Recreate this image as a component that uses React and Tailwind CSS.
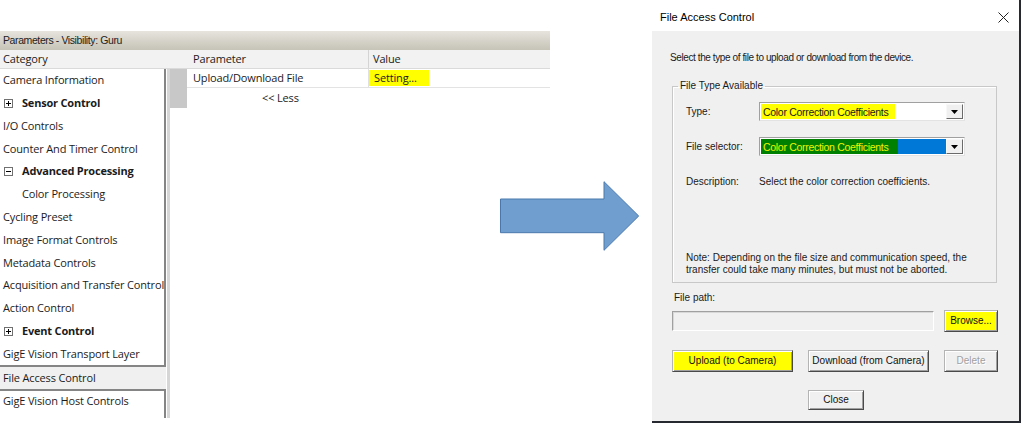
import React from "react";

const SANS = "font-['Liberation_Sans',Arial,sans-serif]";

function TreeBox({ minus }) {
  return (
    <svg width="9" height="9" viewBox="0 0 9 9" className="shrink-0">
      <rect x="0.5" y="0.5" width="8" height="8" fill="white" stroke="#707070" />
      <path d="M2 4.5h5" stroke="#000" />
      {!minus && <path d="M4.5 2v5" stroke="#000" />}
    </svg>
  );
}

const items1 = [
  { t: "Camera Information" },
  { t: "Sensor Control", bold: true, box: "plus" },
  { t: "I/O Controls" },
  { t: "Counter And Timer Control" },
  { t: "Advanced Processing", bold: true, box: "minus" },
  { t: "Color Processing", indent: true },
  { t: "Cycling Preset" },
  { t: "Image Format Controls" },
  { t: "Metadata Controls" },
  { t: "Acquisition and Transfer Control" },
  { t: "Action Control" },
  { t: "Event Control", bold: true, box: "plus" },
  { t: "GigE Vision Transport Layer" },
];

function Item({ it }) {
  if (it.box) {
    return (
      <div className="h-[22.8px] flex items-center pl-[4px] whitespace-nowrap overflow-hidden">
        <TreeBox minus={it.box === "minus"} />
        <span className="ml-[9px] font-bold tracking-[-0.2px]">{it.t}</span>
      </div>
    );
  }
  return (
    <div
      className={
        "h-[22.8px] flex items-center whitespace-nowrap overflow-hidden " +
        (it.indent ? "pl-[22px]" : "pl-[3px]")
      }
    >
      {it.t}
    </div>
  );
}

function WinButton({ children, className = "", yellow, disabled }) {
  return (
    <div
      className={
        "flex items-center justify-center whitespace-nowrap border border-[#b4b4b4] border-b-[#4a4a4a] border-r-[#4a4a4a] shadow-[inset_1px_1px_0_#ffffff,inset_-1px_-1px_0_#a0a0a0] " +
        (yellow ? "bg-[#ffff00] " : "bg-[#f0f0f0] ") +
        (disabled ? "text-[#a0a0a0] [text-shadow:1px_1px_0_#ffffff] " : "text-[#111] ") +
        className
      }
    >
      {children}
    </div>
  );
}

function DropBtn() {
  return (
    <div className="w-[17px] h-full bg-[#f0f0f0] border border-[#f8f8f8] border-b-[#6a6a6a] border-r-[#6a6a6a] flex items-center justify-center">
      <svg width="7" height="4" viewBox="0 0 7 4">
        <path d="M0 0h7L3.5 4z" fill="#000" />
      </svg>
    </div>
  );
}

function Dialog() {
  return (
    <div className={"ml-[102px] w-[369px] h-[423px] flex flex-col border-r-2 border-b-2 border-[#262a30] bg-white " + SANS}>
      <div className="h-[31px] shrink-0 flex items-center justify-between pl-[8px] pr-[10px] pt-[3px] text-[11px] text-black">
        <span>File Access Control</span>
        <svg width="11" height="11" viewBox="0 0 11 11">
          <path d="M0.5 0.5l10 10M10.5 0.5l-10 10" stroke="#222" strokeWidth="1" />
        </svg>
      </div>
      <div className="flex-1 bg-[#f0f0f0] flex flex-col text-[10px] leading-[12px] text-[#1a1a1a]">
        <div className="mt-[21px] ml-[18px] h-[12px] tracking-[-0.4px] whitespace-nowrap">
          Select the type of file to upload or download from the device.
        </div>
        <fieldset className="mt-[16px] ml-[20px] w-[325px] h-[203px] border border-[#c8c8c8] shadow-[inset_1px_1px_0_#ffffff]">
          <legend className="ml-[5px] px-[2px] h-[12px] leading-[12px]">File Type Available</legend>
          <div className="flex flex-col pl-[13px]">
            <div className="mt-[10px] flex items-center h-[19px]">
              <div className="w-[73px]">Type:</div>
              <div className="w-[206px] h-[19px] flex border border-[#a0a0a0] border-b-[#e3e3e3] border-r-[#e3e3e3] bg-white p-[1px]">
                <div className="flex-1 flex bg-white">
                  <span className="w-[134px] h-full bg-[#ffff00] pl-[2px] flex items-center text-[10.5px] tracking-[-0.3px] whitespace-nowrap">
                    Color Correction Coefficients
                  </span>
                </div>
                <DropBtn />
              </div>
            </div>
            <div className="mt-[16px] flex items-center h-[19px]">
              <div className="w-[73px]">File selector:</div>
              <div className="w-[206px] h-[19px] flex border border-[#a0a0a0] border-b-[#e3e3e3] border-r-[#e3e3e3] bg-white p-[1px]">
                <div className="flex-1 flex bg-[#0078d7]">
                  <span className="w-[137px] h-full bg-[#008000] text-[#f0f500] pl-[2px] flex items-center text-[10.5px] tracking-[-0.3px] whitespace-nowrap">
                    Color Correction Coefficients
                  </span>
                </div>
                <DropBtn />
              </div>
            </div>
            <div className="mt-[20px] flex h-[12px]">
              <div className="w-[73px]">Description:</div>
              <div>Select the color correction coefficients.</div>
            </div>
            <div className="mt-[64px] whitespace-nowrap">
              Note: Depending on the file size and communication speed, the
              <br />
              transfer could take many minutes, but must not be aborted.
            </div>
          </div>
        </fieldset>
        <div className="mt-[9px] ml-[22px] h-[12px]">File path:</div>
        <div className="mt-[6px] ml-[20px] flex items-start">
          <div className="mt-[1px] w-[262px] h-[20px] bg-[#f0f0f0] border border-[#a0a0a0] border-b-[#ffffff] border-r-[#ffffff] shadow-[inset_1px_1px_0_#d8d8d8]" />
          <WinButton yellow className="ml-[10px] w-[54px] h-[22px]">Browse...</WinButton>
        </div>
        <div className="mt-[18px] ml-[20px] flex">
          <WinButton yellow className="w-[121px] h-[22px]">Upload (to Camera)</WinButton>
          <WinButton className="ml-[15px] w-[121px] h-[22px]">Download (from Camera)</WinButton>
          <WinButton disabled className="ml-[15px] w-[54px] h-[22px]">Delete</WinButton>
        </div>
        <div className="mt-[18px] ml-[156px] flex">
          <WinButton className="w-[56px] h-[20px]">Close</WinButton>
        </div>
      </div>
    </div>
  );
}

function LeftPanel() {
  return (
    <div className="w-[550px] mt-[31px] h-[387px] shrink-0 flex flex-col font-['Open_Sans',sans-serif] text-[11px] tracking-[-0.15px] text-[#1b1b1b]">
      <div className={"h-[19px] shrink-0 bg-linear-to-b from-[#e6e4dd] to-[#c6c3b7] flex items-center pl-[3px] text-[10.5px] tracking-[-0.4px] text-[#222] " + SANS}>
        Parameters - Visibility: Guru
      </div>
      <div className="h-[19px] shrink-0 bg-[#f2f2f2] border-b border-[#dadada] flex">
        <div className="w-[189px] pl-[3px] flex items-center">Category</div>
        <div className="w-[179px] pl-[4px] flex items-center">Parameter</div>
        <div className="flex-1 border-l border-[#d4d4d4] flex items-center pl-[4px]">Value</div>
      </div>
      <div className="flex-1 flex min-h-0">
        <div className="w-[166px] shrink-0 flex flex-col">
          <div className="border-r-2 border-b-2 border-[#858585]">
            {items1.map((it) => (
              <Item key={it.t} it={it} />
            ))}
          </div>
          <div className="h-[22px] shrink-0 bg-[#f0f0f0] flex items-center pl-[3px] whitespace-nowrap">File Access Control</div>
          <div className="flex-1 border-r-2 border-t-2 border-[#858585]">
            <div className="h-[20px] flex items-center pl-[3px] whitespace-nowrap">GigE Vision Host Controls</div>
          </div>
        </div>
        <div className="w-[1px] shrink-0" />
        <div className="w-[3px] shrink-0 bg-[#d6d6d6]" />
        <div className="w-[17px] shrink-0 flex flex-col">
          <div className="h-[39px] bg-[#c8c8c8]" />
        </div>
        <div className="flex-1 flex flex-col">
          <div className="h-[19px] flex border-b border-[#e3e3e3]">
            <div className="w-[181px] pl-[6px] flex items-center whitespace-nowrap">Upload/Download File</div>
            <div className="flex-1 border-l border-[#e0e0e0] flex items-center">
              <span className="bg-[#ffff00] w-[60px] h-[16px] flex items-center pl-[5px]">Setting...</span>
            </div>
          </div>
          <div className="h-[20px] flex items-center pl-[75px]">&lt;&lt; Less</div>
        </div>
      </div>
    </div>
  );
}

export default function App() {
  return (
    <div className="relative w-[1028px] h-[432px] bg-white flex items-start overflow-hidden">
      <LeftPanel />
      <Dialog />
      <svg className="absolute left-[500px] top-[181px]" width="140" height="70" viewBox="0 0 140 70">
        <path d="M0.5 18H104V0.7L138.7 35L104 69.3V51.7H0.5Z" fill="#6f9ecf" stroke="#4a78ad" strokeWidth="1" />
      </svg>
    </div>
  );
}
